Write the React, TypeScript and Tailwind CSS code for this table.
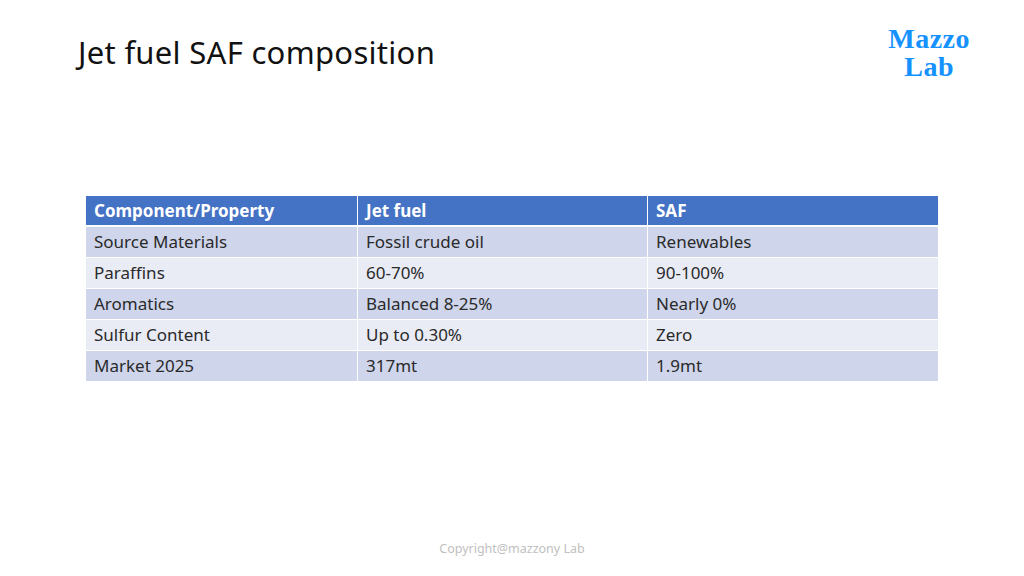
const rows = [
  ["Source Materials", "Fossil crude oil", "Renewables"],
  ["Paraffins", "60-70%", "90-100%"],
  ["Aromatics", "Balanced 8-25%", "Nearly 0%"],
  ["Sulfur Content", "Up to 0.30%", "Zero"],
  ["Market 2025", "317mt", "1.9mt"],
];

export default function App() {
  return (
    <div className="relative w-[1024px] h-[576px] bg-white overflow-hidden font-['Noto_Sans','Liberation_Sans',sans-serif]">
      {/* Header */}
      <div className="flex justify-between items-start pl-[78px] pr-[54px] pt-[30px]">
        <h1 className="text-[31px] leading-[44px] text-[#111] font-normal tracking-[0.3px]">
          Jet fuel SAF composition
        </h1>
        <div className="text-center font-['Liberation_Serif',serif] font-bold text-[28px] leading-[28px] tracking-[0.5px] text-[#1592ff] mt-[-5px]">
          <div>Mazzo</div>
          <div>Lab</div>
        </div>
      </div>

      {/* Table */}
      <div className="ml-[86px] mt-[115px] w-[852px] text-[17px] text-[#2a2a2a]">
        <div className="grid grid-cols-[272px_290px_290px] h-[31px] bg-[#4472c4] text-white font-bold border-b-2 border-white">
          <div className="px-[8px] flex items-center border-r border-white">Component/Property</div>
          <div className="px-[8px] flex items-center border-r border-white">Jet fuel</div>
          <div className="px-[8px] flex items-center">SAF</div>
        </div>
        {rows.map((r, i) => (
          <div
            key={i}
            className={`grid grid-cols-[272px_290px_290px] h-[31px] border-b border-white ${
              i % 2 === 0 ? "bg-[#cfd5ea]" : "bg-[#e9ebf5]"
            }`}
          >
            <div className="px-[8px] flex items-center border-r border-white">{r[0]}</div>
            <div className="px-[8px] flex items-center border-r border-white">{r[1]}</div>
            <div className="px-[8px] flex items-center">{r[2]}</div>
          </div>
        ))}
      </div>

      {/* Footer */}
      <div className="absolute bottom-[17px] left-0 right-0 text-center text-[12.5px] text-[#bfbfbf]">
        Copyright@mazzony Lab
      </div>
    </div>
  );
}
